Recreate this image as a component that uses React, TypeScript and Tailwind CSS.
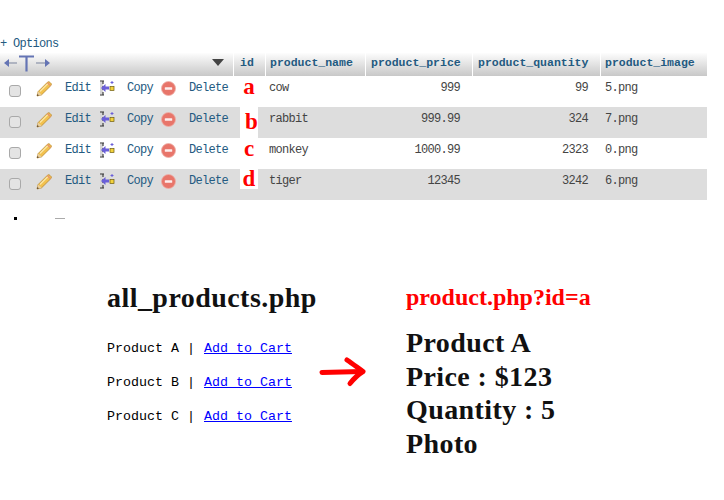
const mono = { fontFamily: '"Liberation Mono", monospace' };

const rows = [
  { id: 'a', name: 'cow', price: '999', qty: '99', image: '5.png' },
  { id: 'b', name: 'rabbit', price: '999.99', qty: '324', image: '7.png' },
  { id: 'c', name: 'monkey', price: '1000.99', qty: '2323', image: '0.png' },
  { id: 'd', name: 'tiger', price: '12345', qty: '3242', image: '6.png' },
];

function ColumnArrows() {
  return (
    <svg width="52" height="22" viewBox="0 0 52 22" fill="none">
      <path d="M6 10h11" stroke="#8a93a8" strokeWidth="1.200" />
      <path d="M9 6l-5 4 5 4z" fill="#6474b4" />
      <path d="M19 3.500h15M26.500 3.500v15" stroke="#6474b4" strokeWidth="2.200" />
      <path d="M36 10h11" stroke="#8a93a8" strokeWidth="1.200" />
      <path d="M45 6l5 4-5 4z" fill="#6474b4" />
    </svg>
  );
}

function Pencil() {
  return (
    <svg width="16" height="16" viewBox="0 0 16 16">
      <path d="M1 15l1.200-4.500L11.500 1.200c.8-.7 1.800-.5 2.500.2l.9.9c.6.7.7 1.600 0 2.300L5.600 13.800z" fill="#f2c14e" stroke="#b8862b" strokeWidth=".8" />
      <path d="M4 10.500l8.200-8.200" stroke="#fbe7a5" strokeWidth="1.300" />
      <path d="M11.300 1.600l3.200 3.200" stroke="#e8956b" strokeWidth="1.400" />
      <path d="M1 15l1.200-4.500 3.400 3.300z" fill="#e8cfa0" />
      <path d="M1 15l.5-1.900 1.400 1.400z" fill="#4a3520" />
    </svg>
  );
}

function CopyIcon() {
  return (
    <svg width="16" height="16" viewBox="0 0 16 16">
      <rect x="1" y="1.500" width="3" height="13" fill="#d6d6d6" />
      <path d="M1 1h4M4 1v3M4 6v4M4 12v3M1 15h4" stroke="#333" strokeWidth="1.100" fill="none" />
      <path d="M2 8l4.500-4v2.600H10v2.800H6.500V12z" fill="#6a5fd8" />
      <rect x="11" y="6.500" width="4" height="4" fill="#f3d23c" stroke="#6b5a10" strokeWidth=".7" />
      <path d="M13 1v3M11.500 2.500h3" stroke="#6a5fd8" strokeWidth="1" />
    </svg>
  );
}

function DeleteIcon() {
  return (
    <svg width="15" height="15" viewBox="0 0 15 15">
      <circle cx="7.500" cy="7.500" r="7" fill="#e8756a" stroke="#eeb0a8" strokeWidth=".8" />
      <rect x="3.800" y="6.300" width="7.400" height="2.400" rx=".5" fill="#fdeeee" />
    </svg>
  );
}

function Arrow() {
  return (
    <svg width="50" height="34" viewBox="0 0 50 34" fill="none">
      <path d="M4 17.500c12-.4 26-.6 40-1" stroke="#ff0000" strokeWidth="5" strokeLinecap="round" />
      <path d="M29 5c6 4 11 8 16 11.500-5 3-9 7-13 12" stroke="#ff0000" strokeWidth="5" strokeLinecap="round" strokeLinejoin="round" />
    </svg>
  );
}

export default function App() {
  return (
    <div className="w-[724px] h-[500px] bg-white overflow-hidden text-[#444]" style={mono}>
      <div className="h-[38px]" />
      <div className="h-[15px] text-[12px] tracking-[-0.7px] leading-[12px] text-[#235a81]">+ Options</div>

      {/* Table */}
      <div className="w-[707px]">
        <div className="flex h-[23px] text-[11.500px] font-bold leading-[20px] text-[#235a81] gap-px">
          <div className="w-[233px] flex items-start justify-between pr-[9px] bg-gradient-to-b from-[#fdfdfd] to-[#c8c8c8]">
            <ColumnArrows />
            <svg width="12" height="7" viewBox="0 0 12 7" className="mt-[6px]">
              <path d="M0 0h12L6 7z" fill="#444" />
            </svg>
          </div>
          <div className="w-[31px] pl-[6px] bg-gradient-to-b from-[#fdfdfd] to-[#c8c8c8]">id</div>
          <div className="w-[99px] pl-[4px] bg-gradient-to-b from-[#fdfdfd] to-[#c8c8c8]">product_name</div>
          <div className="w-[106px] pl-[5px] bg-gradient-to-b from-[#fdfdfd] to-[#c8c8c8]">product_price</div>
          <div className="w-[127px] pl-[5px] bg-gradient-to-b from-[#fdfdfd] to-[#c8c8c8]">product_quantity</div>
          <div className="flex-1 pl-[4px] bg-gradient-to-b from-[#fdfdfd] to-[#c8c8c8]">product_image</div>
        </div>

        {rows.map((row, i) => (
          <div key={row.id} className={`flex h-[31px] text-[12px] tracking-[-0.7px] ${i % 2 === 1 ? 'bg-[#dddddd]' : 'bg-white'}`}>
            <div className="w-[240px] flex items-start">
              <span className="ml-[9px] mt-[9px] w-[12px] h-[12px] rounded-[3px] bg-[#e4e4e4] border border-[#a9a9a9]" />
              <span className="ml-[15px] mt-[5px]"><Pencil /></span>
              <span className="ml-[13px] mt-[5px] leading-[14px] text-[#235a81]">Edit</span>
              <span className="ml-[8px] mt-[4px]"><CopyIcon /></span>
              <span className="ml-[12px] mt-[5px] leading-[14px] text-[#235a81]">Copy</span>
              <span className="ml-[8px] mt-[5px]"><DeleteIcon /></span>
              <span className="ml-[13px] mt-[5px] leading-[14px] text-[#235a81]">Delete</span>
            </div>
            <div className={`w-[18px] shrink-0 text-center font-bold text-[#ff0000] text-[23px] tracking-normal ${i === 1 ? 'bg-white h-[31px] pt-[4px] pl-[5px] leading-[22px]' : i === 3 ? 'bg-white h-[20px] leading-[20px]' : 'leading-[22px]'}`} style={{ fontFamily: '"Liberation Serif", serif' }}>
              {row.id}
            </div>
            <div className="w-[107px] pl-[11px] pt-[5px] leading-[14px]">{row.name}</div>
            <div className="w-[95px] pt-[5px] leading-[14px] text-right">{row.price}</div>
            <div className="w-[128px] pt-[5px] leading-[14px] text-right">{row.qty}</div>
            <div className="flex-1 pl-[17px] pt-[5px] leading-[14px]">{row.image}</div>
          </div>
        ))}
      </div>

      {/* Cut off icons under the table */}
      <div className="flex h-[4px] mt-[17px]">
        <span className="ml-[14px] w-[3px] h-[3px] bg-black" />
        <span className="ml-[38px] mt-px w-[10px] h-px bg-[#aaaaaa]" />
      </div>

      {/* Explanation */}
      <div className="flex mt-[61px]">
        <div className="ml-[107px] w-[299px]">
          <div className="flex items-start">
            <div className="w-[212px]">
              <h1 className="text-[28px] tracking-[0.45px] leading-[31px] font-bold text-[#111] whitespace-nowrap" style={{ fontFamily: '"Liberation Serif", serif' }}>all_products.php</h1>
              <div className="mt-[26px] flex flex-col gap-[14px] text-[13.330px] leading-[20px] text-black whitespace-nowrap">
                <div>Product A | <a href="#" className="ml-px text-[#0000ff] underline">Add to Cart</a></div>
                <div>Product B | <a href="#" className="ml-px text-[#0000ff] underline">Add to Cart</a></div>
                <div>Product C | <a href="#" className="ml-px text-[#0000ff] underline">Add to Cart</a></div>
              </div>
            </div>
            <div className="mt-[73px] -ml-[1px]"><Arrow /></div>
          </div>
        </div>
        <div className="font-bold" style={{ fontFamily: '"Liberation Serif", serif' }}>
          <div className="text-[24px] leading-[31px] text-[#ff0000]">product.php?id=a</div>
          <div className="mt-[13px] text-[28px] tracking-[0.4px] leading-[33.500px] text-[#111]">
            <div>Product A</div>
            <div>Price : $123</div>
            <div>Quantity : 5</div>
            <div>Photo</div>
          </div>
        </div>
      </div>
    </div>
  );
}
